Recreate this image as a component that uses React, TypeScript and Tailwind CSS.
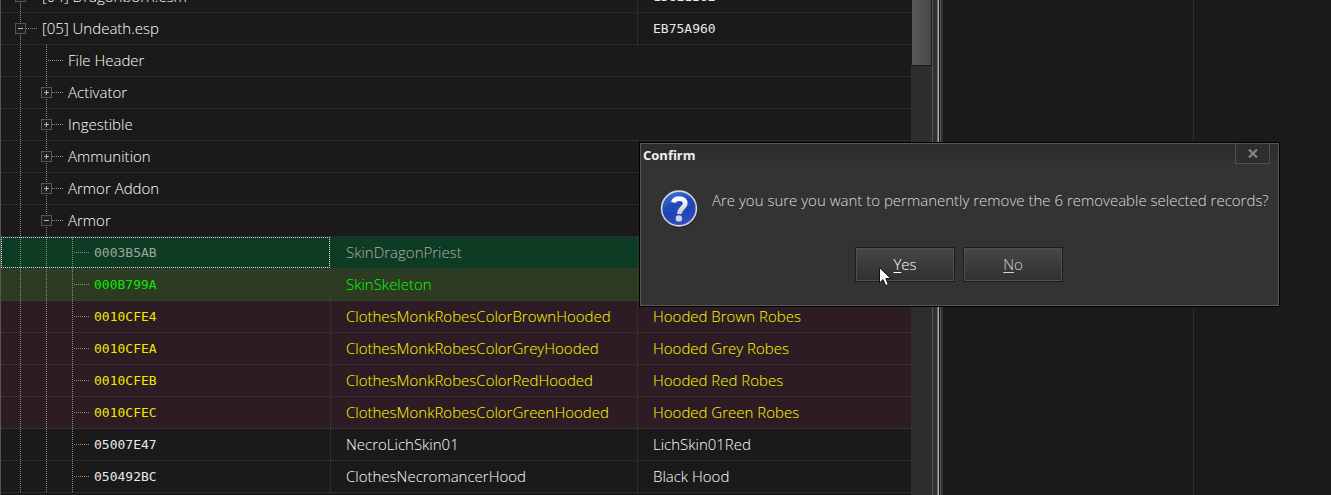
import React from "react";

type Kind = "none" | "plus" | "minus";
type Tone = "plain" | "selected" | "injected" | "conflict";

interface Row {
  level: number;
  box: Kind;
  label: string;
  editorId?: string;
  name?: string;
  crc?: string;
  tone?: Tone;
}

const rows: Row[] = [
  { level: 0, box: "plus", label: "[04] Dragonborn.esm", crc: "138E1B62" },
  { level: 0, box: "minus", label: "[05] Undeath.esp", crc: "EB75A960" },
  { level: 1, box: "none", label: "File Header" },
  { level: 1, box: "plus", label: "Activator" },
  { level: 1, box: "plus", label: "Ingestible" },
  { level: 1, box: "plus", label: "Ammunition" },
  { level: 1, box: "plus", label: "Armor Addon" },
  { level: 1, box: "minus", label: "Armor" },
  { level: 2, box: "none", label: "0003B5AB", editorId: "SkinDragonPriest", name: "", tone: "selected" },
  { level: 2, box: "none", label: "000B799A", editorId: "SkinSkeleton", name: "", tone: "injected" },
  { level: 2, box: "none", label: "0010CFE4", editorId: "ClothesMonkRobesColorBrownHooded", name: "Hooded Brown Robes", tone: "conflict" },
  { level: 2, box: "none", label: "0010CFEA", editorId: "ClothesMonkRobesColorGreyHooded", name: "Hooded Grey Robes", tone: "conflict" },
  { level: 2, box: "none", label: "0010CFEB", editorId: "ClothesMonkRobesColorRedHooded", name: "Hooded Red Robes", tone: "conflict" },
  { level: 2, box: "none", label: "0010CFEC", editorId: "ClothesMonkRobesColorGreenHooded", name: "Hooded Green Robes", tone: "conflict" },
  { level: 2, box: "none", label: "05007E47", editorId: "NecroLichSkin01", name: "LichSkin01Red" },
  { level: 2, box: "none", label: "050492BC", editorId: "ClothesNecromancerHood", name: "Black Hood" },
];

const tones: Record<Tone, string> = {
  plain: "text-white",
  selected: "bg-[#0d3b24] text-[#b0b0a8]",
  injected: "bg-[#2d3b22] text-[#00ff00]",
  conflict: "bg-[#2d1c23] text-[#ffff00]",
};

const mono = "font-['DejaVu_Sans_Mono',monospace] text-[13px] opacity-90";

function Guide() {
  return (
    <svg width="26" height="31" className="shrink-0" shapeRendering="crispEdges" aria-hidden="true">
      <path d="M13.5 0V31" stroke="#8a8a8a" strokeDasharray="1 1" />
    </svg>
  );
}

function Node({ box }: { box: Kind }) {
  return (
    <svg width="35" height="31" className="shrink-0" shapeRendering="crispEdges" aria-hidden="true">
      <path d="M13.5 0V31" stroke="#8a8a8a" strokeDasharray="1 1" />
      <path d="M15 15.5H30" stroke="#8a8a8a" strokeDasharray="1 1" />
      {box !== "none" && (
        <>
          <rect x="8.5" y="10.5" width="10" height="10" fill="#1f1f1f" stroke="#555" />
          <path d="M11 15.5H16" stroke="#b5b5b5" />
        </>
      )}
      {box === "plus" && <path d="M13.5 13V18" stroke="#b5b5b5" />}
    </svg>
  );
}

function TreeRow({ row }: { row: Row }) {
  const cell = "relative h-8 overflow-hidden border-b border-dotted border-[#3c3c3c] bg-clip-padding p-0 whitespace-nowrap";
  const divider = "border-r";
  const span = row.editorId !== undefined ? 1 : row.crc !== undefined ? 2 : 3;
  const tone = tones[row.tone ?? "plain"];
  return (
    <tr className={tone}>
      <td colSpan={span} className={`${cell} ${tone} ${span < 3 ? divider : ""}`}>
        <div className="flex h-[31px] items-center pl-[6px]">
          {Array.from({ length: row.level }, (_, i) => (
            <Guide key={i} />
          ))}
          <Node box={row.box} />
          <span className={row.level === 2 ? mono : ""}>{row.label}</span>
        </div>
        {row.tone === "selected" && <div className="absolute inset-0 border border-dotted border-[#e0e0e0]" />}
      </td>
      {row.editorId !== undefined && <td className={`${cell} ${tone} ${divider} pl-[15px]`}>{row.editorId}</td>}
      {row.editorId !== undefined && <td className={`${cell} ${tone} pl-[15px]`}>{row.name}</td>}
      {row.crc !== undefined && (
        <td className={`${cell} pl-[15px]`}>
          <span className={`block ${mono}`}>{row.crc}</span>
        </td>
      )}
    </tr>
  );
}

function QuestionIcon() {
  return (
    <svg width="40" height="40" viewBox="0 0 40 40" className="shrink-0" aria-hidden="true">
      <defs>
        <linearGradient id="ball" x1="0" y1="0" x2="0.4" y2="1">
          <stop offset="0" stopColor="#4a7bdc" />
          <stop offset="0.5" stopColor="#1d48b4" />
          <stop offset="1" stopColor="#3a5be0" />
        </linearGradient>
        <linearGradient id="mark" x1="0" y1="0" x2="0" y2="1">
          <stop offset="0" stopColor="#ffffff" />
          <stop offset="1" stopColor="#c4c8d4" />
        </linearGradient>
      </defs>
      <circle cx="19.5" cy="20.5" r="18.5" fill="#000" opacity="0.25" />
      <circle cx="19" cy="19.5" r="17.4" fill="url(#ball)" stroke="#d6d6d6" strokeWidth="1.6" />
      <path d="M3 22C8 25 25 21 35 13C37 24 32 35 19 35.6C9 35 3 29 3 22Z" fill="#0b2f8c" opacity="0.3" />
      <path d="M13.4 13.6C14 10.8 16.2 9.6 19.4 9.6C23.4 9.6 25.2 11.7 25.2 14.4C25.2 18.6 19.4 19 19.4 25" fill="none" stroke="url(#mark)" strokeWidth="4.8" />
      <circle cx="18.9" cy="29.4" r="3.2" fill="#d4d6de" />
    </svg>
  );
}

const button =
  "h-[35px] w-[100px] border border-[#1c1c1c] bg-linear-to-b from-[#474747] to-[#303030] text-[15px] inset-ring inset-ring-[#505050]";

function ConfirmDialog() {
  return (
    <div
      role="dialog"
      aria-labelledby="confirm-title"
      className="absolute top-[142px] left-[639px] w-[641px] border border-black bg-[#333]"
    >
      <div className="h-[163px] border border-[#585858]">
        <div className="flex h-5 items-start justify-between bg-linear-to-b from-[#2b2b2b] to-[#333] pr-2 pl-0.5">
          <h2 id="confirm-title" className="pt-px text-[13px] leading-5 font-bold text-[#f0f0f0]">
            Confirm
          </h2>
          <button aria-label="Close" className="-mt-px flex h-[21px] w-[35px] items-center justify-center border border-[#505050] bg-[#2e2e2e]">
            <svg width="10" height="9" viewBox="0 0 10 9" aria-hidden="true">
              <path d="M1 0.5L9 8.5M9 0.5L1 8.5" stroke="#858585" strokeWidth="2.2" />
            </svg>
          </button>
        </div>
        <div className="flex items-start pt-[25px] pl-[19px]">
          <QuestionIcon />
          <p className="pt-px pl-3 text-[15px] leading-5 whitespace-nowrap text-[#dedede]">
            Are you sure you want to permanently remove the 6 removeable selected records?
          </p>
        </div>
        <div className="relative mt-[18px] flex gap-2 pl-[214px]">
          <button className={`${button} text-white`}>
            <u className="underline-offset-2">Y</u>es
          </button>
          <button className={`${button} text-[#d0d0d0]`}>
            <u className="underline-offset-2">N</u>o
          </button>
          <svg width="13" height="20" viewBox="0 0 13 20" className="absolute top-5 left-[238px]" aria-hidden="true">
            <path d="M0.5 0.5V16L4 12.6L6.7 18.6L9.4 17.4L6.8 11.6H11.8Z" fill="#fff" stroke="#101018" />
          </svg>
        </div>
      </div>
    </div>
  );
}

export default function App() {
  return (
    <div className="relative grid h-screen grid-cols-[minmax(0,932fr)_11px_minmax(0,388fr)] overflow-hidden bg-[#1a1a1a] font-['Open_Sans','Noto_Sans',sans-serif] text-[15px] font-light">
      <div className="flex min-w-0 overflow-hidden border-l border-[#555]">
        <div className="min-w-0 flex-1">
          <table className="-mt-[19px] w-full table-fixed border-separate border-spacing-0">
            <colgroup>
              <col className="w-[330px]" />
              <col className="w-[307px]" />
              <col />
            </colgroup>
            <tbody>
              {rows.map((row) => (
                <TreeRow key={row.label} row={row} />
              ))}
            </tbody>
          </table>
        </div>
        <div className="w-[21px] bg-[#2d2d2d]">
          <div className="h-[66px] border-x border-b border-[#1a1a1a] bg-linear-to-r from-[#5a5a5a] to-[#484848]" />
        </div>
      </div>
      <div className="flex border-l border-[#555] bg-[#303030]">
        <div className="w-1" />
        <div className="w-px bg-[#707070]" />
        <div className="w-px bg-[#a8a8a8]" />
        <div className="w-px bg-[#1a1a1a]" />
        <div className="w-px bg-[#555]" />
      </div>
      <div className="grid grid-cols-[251px_1fr]">
        <div className="border-r border-dotted border-[#3c3c3c]" />
      </div>
      <ConfirmDialog />
    </div>
  );
}
